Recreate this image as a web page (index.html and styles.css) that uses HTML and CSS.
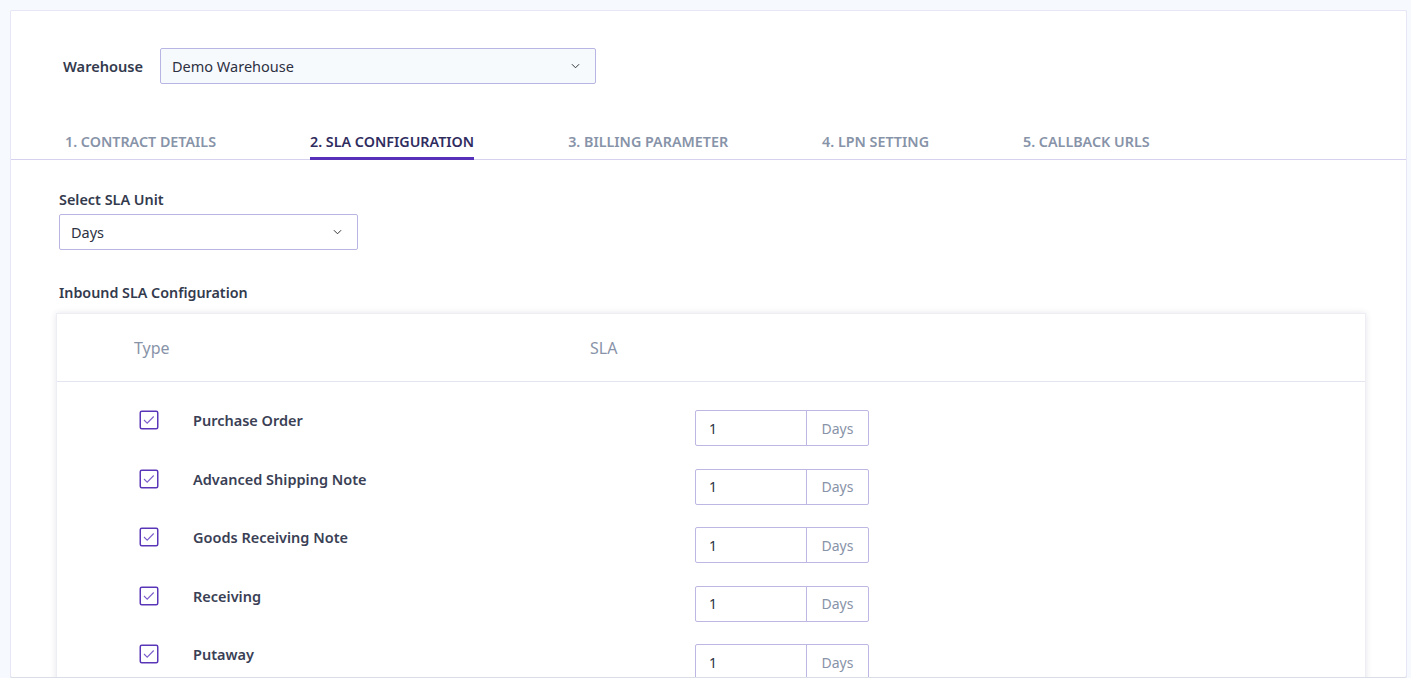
FILE: index.html
```html
<!DOCTYPE html>
<html lang="en">
<head>
    <meta charset="UTF-8">
    <meta name="viewport" content="width=device-width, initial-scale=1.0">
    <title>Contract - SLA Configuration</title>
    <link rel="stylesheet" href="styles.css">
</head>
<body>

<div class="card">
    <div class="card-head">
        <div class="warehouse-row">
            <label class="warehouse-label">Warehouse</label>
            <div class="select select-warehouse">
                <span>Demo Warehouse</span>
                <svg class="chev" viewBox="0 0 10 6" width="9" height="6"><path d="M1 1l4 4 4-4" fill="none" stroke="#333" stroke-width="1.1"/></svg>
            </div>
        </div>

        <div class="tabs">
            <div class="tab">1. CONTRACT DETAILS</div>
            <div class="tab active">2. SLA CONFIGURATION</div>
            <div class="tab">3. BILLING PARAMETER</div>
            <div class="tab">4. LPN SETTING</div>
            <div class="tab">5. CALLBACK URLS</div>
        </div>
    </div>

    <div class="card-body">
        <div class="field-label">Select SLA Unit</div>
        <div class="select select-unit">
            <span>Days</span>
            <svg class="chev" viewBox="0 0 10 6" width="9" height="6"><path d="M1 1l4 4 4-4" fill="none" stroke="#333" stroke-width="1.1"/></svg>
        </div>

        <div class="section-title">Inbound SLA Configuration</div>

        <div class="sla-table">
            <div class="sla-head">
                <div class="col-type">Type</div>
                <div class="col-sla">SLA</div>
            </div>
            <div class="sla-rows" id="rows"></div>
        </div>
    </div>
</div>

<script>
    const types = ["Purchase Order", "Advanced Shipping Note", "Goods Receiving Note", "Receiving", "Putaway"];

    function loadRows() {
        let rows = document.getElementById("rows");
        types.forEach(name => {
            let row = document.createElement("div");
            row.className = "sla-row";
            row.innerHTML =
                '<svg class="check" viewBox="0 0 20 20" width="20" height="20">' +
                    '<rect x="1.25" y="1.25" width="17.5" height="17.5" rx="1.5" fill="#fff" stroke="#5a37b8" stroke-width="1.5"/>' +
                    '<path d="M5 10l3.2 3.2 6.5-6.7" fill="none" stroke="#7d5fcc" stroke-width="1.1"/>' +
                '</svg>' +
                '<span class="type-name">' + name + '</span>' +
                '<div class="input-group"><span class="value">1</span><span class="unit">Days</span></div>';
            rows.appendChild(row);
        });
    }

    window.onload = loadRows;
</script>

</body>
</html>
```

FILE: styles.css
```css
html, body { height: 678px; overflow: hidden; }
body { margin: 0; font-family: "Noto Sans", "Open Sans", sans-serif; background-color: #f6f9fd; color: #333a4d; }

.card { margin: 10px 4px 0 10px; background: #fff; border: 1px solid #e8e6f6; border-bottom: none; height: 666px; border-radius: 2px; overflow: hidden; box-shadow: 0 1px 0 #d9dde6; }

.card-head { border-bottom: 1px solid #d6d1ee; }
.warehouse-row { display: flex; align-items: center; padding: 37px 0 0 52px; }
.warehouse-label { font-size: 14.6px; font-weight: 600; color: #333a4d; width: 97px; }
.select { display: flex; align-items: center; justify-content: space-between; box-sizing: border-box; height: 36px; border: 1px solid #b9b5e2; border-radius: 2px; padding: 0 15px 0 11px; font-size: 14.5px; color: #2d3142; }
.select-warehouse { width: 436px; background: #f7fafd; }
.select-unit { width: 299px; background: #fff; }
.chev { display: block; }

.tabs { display: flex; gap: 94px; padding: 48px 0 0 54px; }
.tab { font-size: 14.3px; font-weight: 600; color: #8793a8; padding-bottom: 6px; border-bottom: 3px solid transparent; margin-bottom: -1px; }
.tab.active { color: #2f2c60; border-bottom-color: #5630b8; }

.card-body { padding: 30px 40px 0 48px; }
.field-label { font-size: 14.4px; font-weight: 600; color: #333a4d; margin-bottom: 5px; }
.section-title { font-size: 14.3px; font-weight: 600; color: #333a4d; margin-top: 33px; margin-bottom: 11px; }

.sla-table { margin-left: -3px; background: #fff; border: 1px solid #eceef3; box-shadow: 0 0 6px rgba(40, 50, 90, 0.12); height: 400px; }
.sla-head { display: flex; height: 67px; align-items: center; border-bottom: 1px solid #e3e5ee; font-size: 16px; color: #8893a8; }
.col-type { box-sizing: border-box; width: 533px; padding-left: 77px; }

.sla-rows { padding-top: 17px; }
.sla-row { display: flex; align-items: center; height: 58.5px; padding-left: 82px; }
.sla-row .check { display: block; margin-top: -16px; }
.type-name { width: 502px; padding-left: 34px; font-size: 14.5px; font-weight: 600; color: #3a3f55; margin-top: -16px; }
.input-group { display: flex; box-sizing: border-box; width: 174px; height: 36px; border: 1px solid #bdb8e3; border-radius: 2px; font-size: 14px; }
.input-group .value { flex: 1; display: flex; align-items: center; padding-left: 13px; color: #2d3142; }
.input-group .unit { width: 61px; border-left: 1px solid #bdb8e3; display: flex; align-items: center; justify-content: center; color: #8893a8; }
```
